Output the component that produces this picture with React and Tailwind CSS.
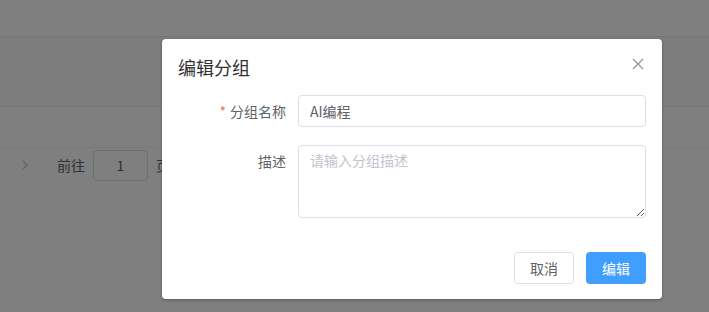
import React from "react";

const font = { fontFamily: '"Noto Sans CJK SC", "Liberation Sans", sans-serif' };

const App = () => {
  return (
    <div className="relative w-[709px] h-[312px] overflow-hidden bg-white" style={font}>
      {/* Page behind the mask */}
      <div className="flex flex-col">
        <div className="h-[37px] border-b border-[#ebeef5]" />
        <div className="h-[70px] border-b border-[#ebeef5] bg-[#fafafa]" />
        <div className="h-[41px] border-b border-[#f2f2f2]" />
        <div className="flex items-center h-[32px] mt-[1px] text-[14px] text-[#606266]">
          <span className="w-[50px] flex justify-center">
            <svg width="8" height="10" viewBox="0 0 8 10" fill="none" stroke="#c0c4cc" strokeWidth="1.2">
              <path d="M2 1l4 4-4 4" />
            </svg>
          </span>
          <span className="ml-[7px]">前往</span>
          <div className="ml-[8px] w-[55px] h-[31px] border border-[#dcdfe6] rounded-[4px] flex items-center justify-center">
            1
          </div>
          <span className="ml-[8px]">页</span>
        </div>
      </div>

      {/* Mask */}
      <div className="absolute inset-0 bg-black/50" />

      {/* Dialog */}
      <div className="absolute left-[162px] top-[39px] w-[500px] bg-white rounded-[4px] shadow-[0_1px_3px_rgba(0,0,0,0.3)]">
        <div className="flex items-center justify-between px-4 pt-4">
          <span className="text-[18px] leading-[24px] text-[#303133]">编辑分组</span>
          <svg width="12" height="12" viewBox="0 0 12 12" stroke="#909399" strokeWidth="1.2" className="mr-[2px] -mt-[6px]">
            <path d="M1 1l10 10M11 1L1 11" />
          </svg>
        </div>

        <div className="px-4 pt-4 flex flex-col gap-[18px]">
          <div className="flex items-center">
            <label className="w-[120px] pr-3 text-right text-[14px] text-[#606266]">
              <span className="text-[#f56c6c] mr-[4px]">*</span>
              分组名称
            </label>
            <input
              defaultValue="AI编程"
              className="flex-1 h-[32px] px-[11px] border border-[#dcdfe6] rounded-[4px] text-[14px] text-[#606266] outline-none"
              style={font}
            />
          </div>
          <div className="flex items-start">
            <label className="w-[120px] pr-3 pt-[6px] text-right text-[14px] leading-[21px] text-[#606266]">
              描述
            </label>
            <textarea
              placeholder="请输入分组描述"
              className="flex-1 h-[73px] px-[11px] py-[4px] border border-[#dcdfe6] rounded-[4px] text-[14px] leading-[21px] text-[#606266] placeholder:text-[#c0c4cc] outline-none"
              style={font}
            />
          </div>
        </div>

        <div className="flex justify-end gap-3 px-4 pt-[34px] pb-[15px]">
          <button className="w-[60px] h-[32px] border border-[#dcdfe6] rounded-[4px] bg-white text-[14px] text-[#606266]">
            取消
          </button>
          <button className="w-[60px] h-[32px] rounded-[4px] bg-[#409eff] text-[14px] text-white">
            编辑
          </button>
        </div>
      </div>
    </div>
  );
};

export default App;
